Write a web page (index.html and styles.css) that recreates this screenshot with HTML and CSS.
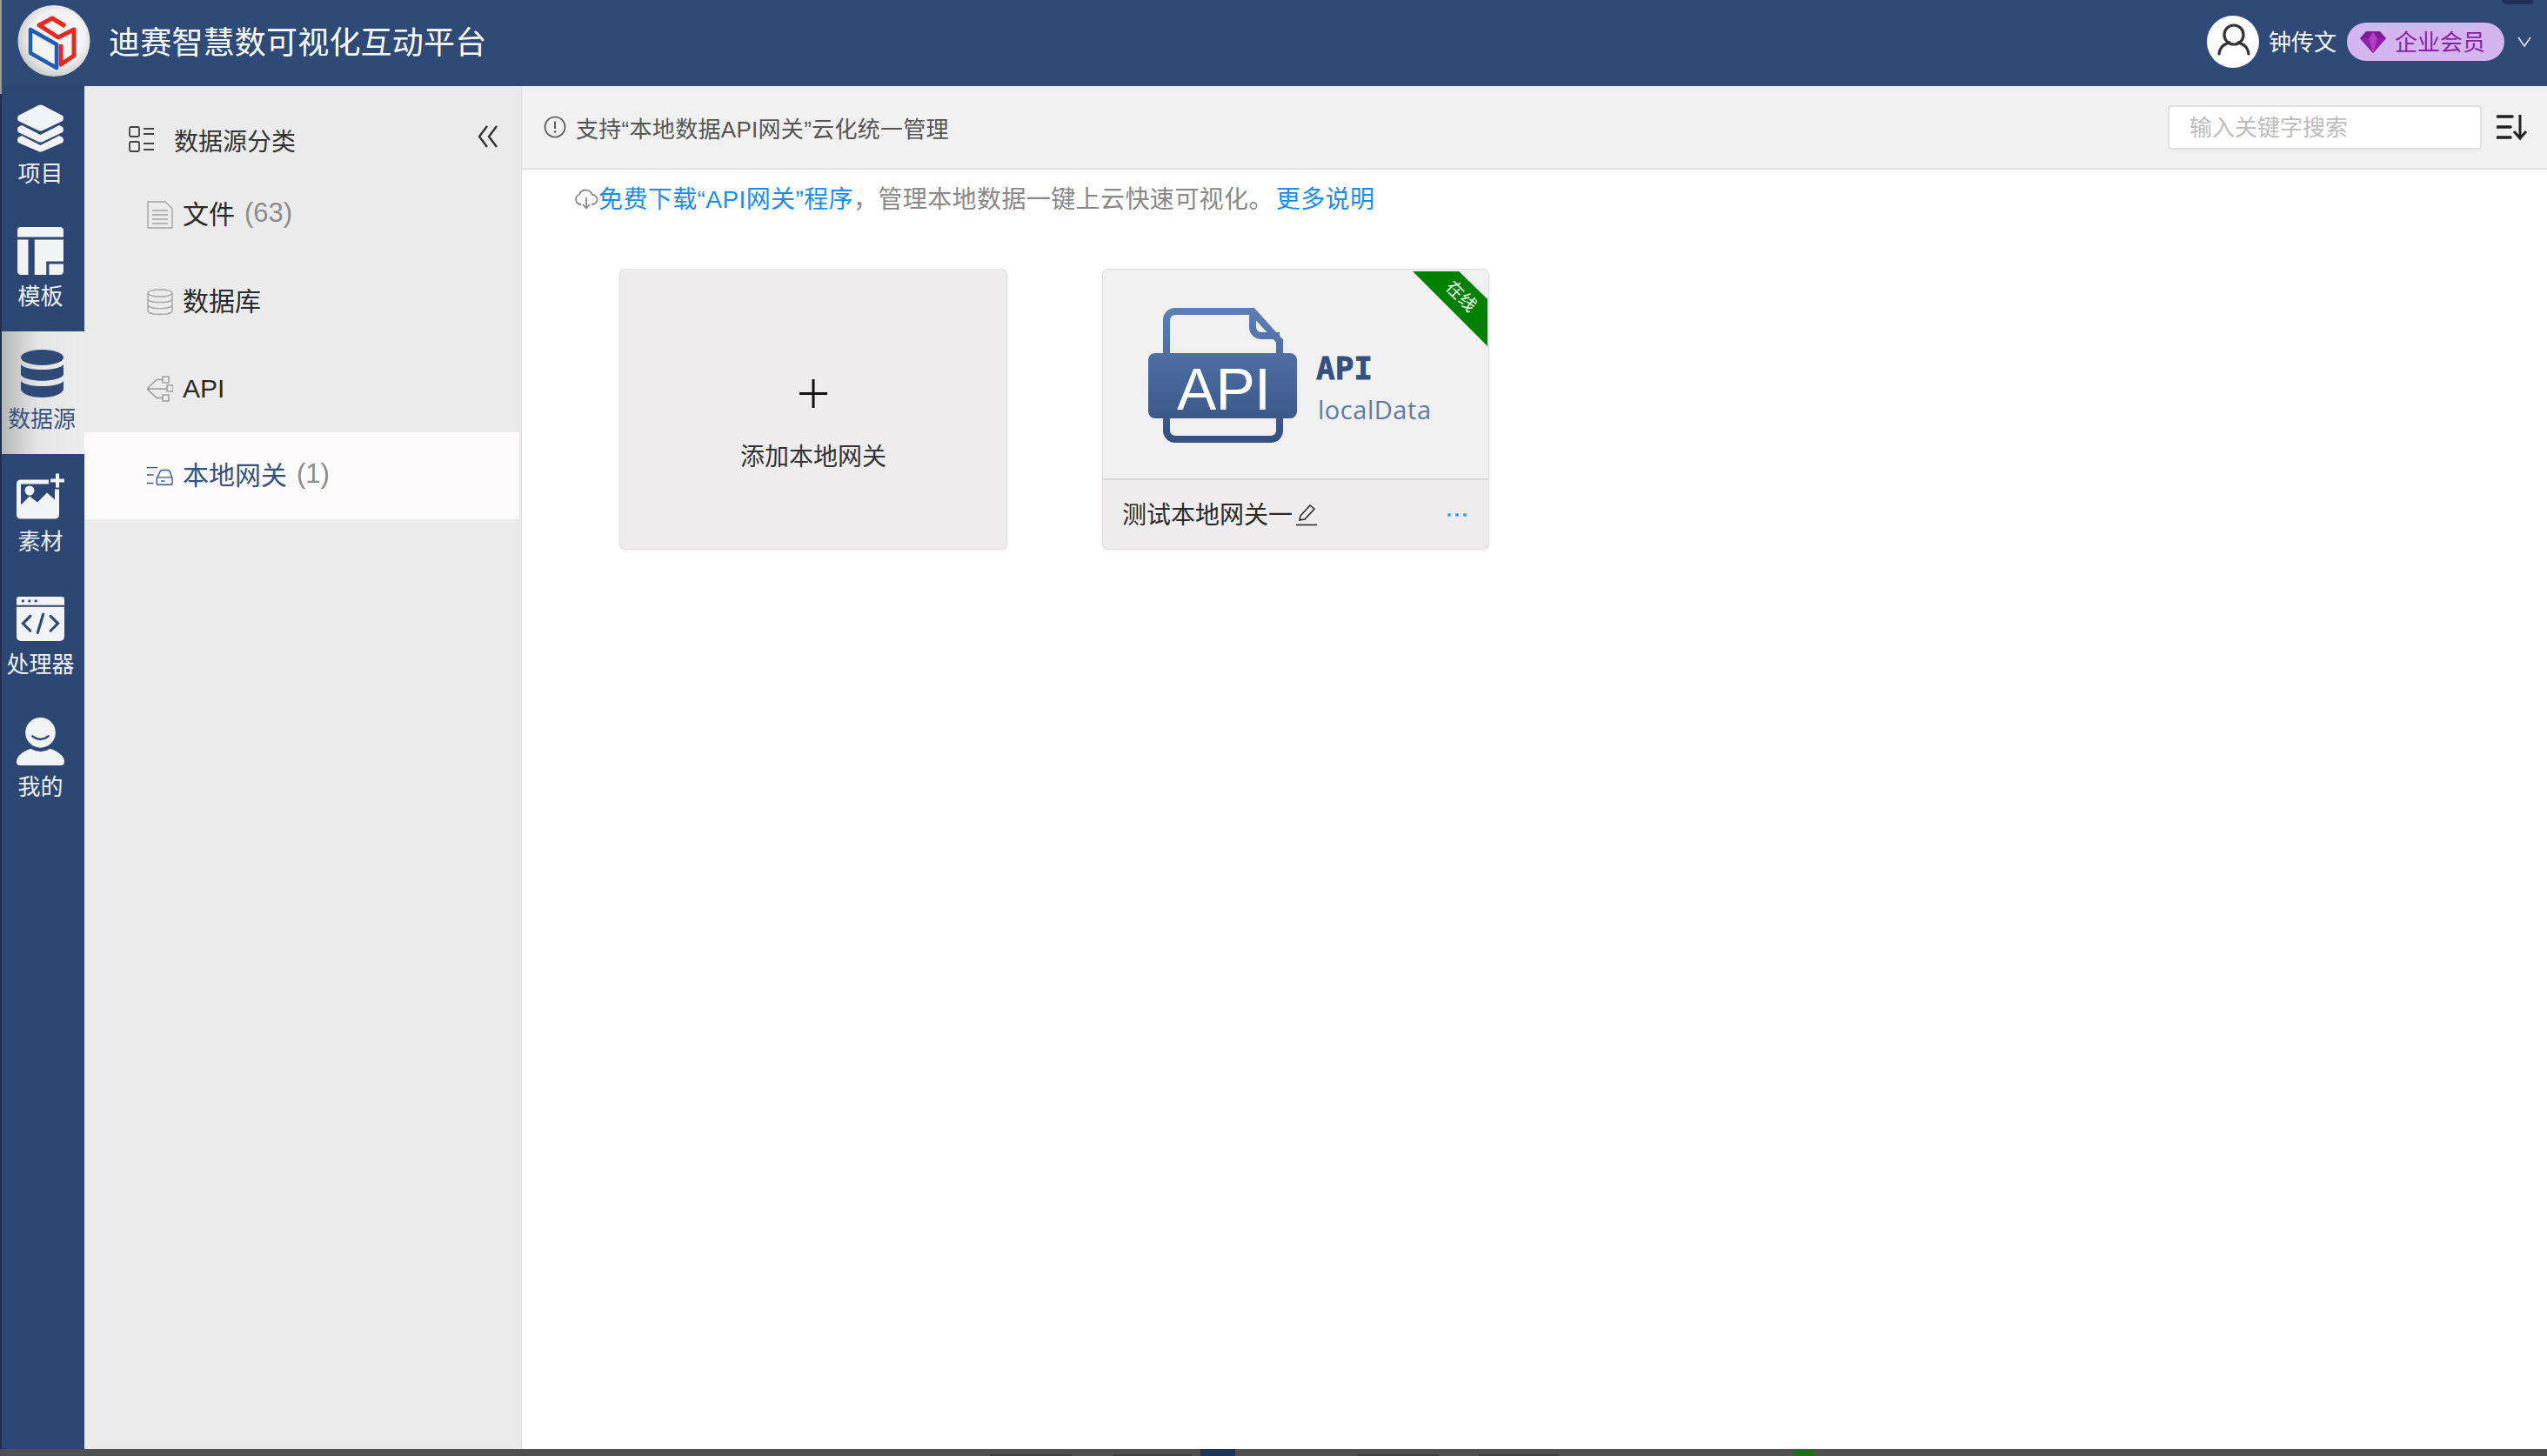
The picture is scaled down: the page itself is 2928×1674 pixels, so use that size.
FILE: index.html
```html
<!DOCTYPE html>
<html lang="zh-CN">
<head>
  <meta charset="UTF-8">
  <title>迪赛智慧数可视化互动平台</title>
  <link rel="stylesheet" href="styles.css">
</head>
<body>
  <header class="topbar">
    <svg class="logo" viewBox="0 0 84 84">
      <defs>
        <radialGradient id="logoBg" cx="0.55" cy="0.45" r="0.6">
          <stop offset="0.6" stop-color="#f4f4f4"/>
          <stop offset="1" stop-color="#c4c4c4"/>
        </radialGradient>
      </defs>
      <ellipse cx="42" cy="41" rx="41.5" ry="41" fill="url(#logoBg)"/>
      <path d="M15 28 L45 45 V72 L15 55 Z" fill="none" stroke="#1f5cb4" stroke-width="4.500" stroke-linejoin="round"/>
      <path d="M55 24 L40 15 L25 23 L47 37 L65 28 V58 L50 68 V45" fill="none" stroke="#e62a20" stroke-width="5" stroke-linejoin="round"/>
    </svg>
    <div class="brand">迪赛智慧数可视化互动平台</div>
    <span class="corner-mark"></span>
    <div class="user">
      <span class="avatar">
        <svg viewBox="0 0 60 60"><circle cx="31" cy="22" r="11" fill="none" stroke="#333" stroke-width="3.2"/><path d="M14 44 C15 35 22 32 26 31 M48 44 C47 35 40 32 36 31" fill="none" stroke="#333" stroke-width="3.2" stroke-linecap="round"/></svg>
      </span>
      <span class="user-name">钟传文</span>
      <span class="vip">
        <svg viewBox="0 0 30 26"><path d="M7 1 H23 L30 9 L15 26 L0 9 Z" fill="#7d1a96"/><path d="M0 9 H30 L15 26 Z" fill="#8f1fa6"/><path d="M10 9 L15 26 L20 9 L15 2 Z" fill="#b23fc6"/></svg>
        <span class="vip-text">企业会员</span>
      </span>
      <svg class="caret" viewBox="0 0 16 12"><path d="M1 1 L8 11 L15 1" fill="none" stroke="#e4e8ef" stroke-width="1.6"/></svg>
    </div>
  </header>

  <div class="layout">
    <nav class="rail">
      <a class="rail-item">
        <svg class="rail-icon" viewBox="0 0 55 55">
          <path d="M25 1 Q27.500 0 30 1 L53 13 Q55 16 53 19 L30 30 Q27.500 31 25 30 L2 19 Q0 16 2 13 Z"/>
          <path d="M2 26 L6 24 L27.500 35 L49 24 L53 26 Q55 29 53 32 L30 43 Q27.500 44 25 43 L2 32 Q0 29 2 26 Z"/>
          <path d="M2 38 L6 36 L27.500 47 L49 36 L53 38 Q55 41 53 44 L30 54 Q27.500 55 25 54 L2 44 Q0 41 2 38 Z"/>
        </svg>
        <span>项目</span>
      </a>
      <a class="rail-item">
        <svg class="rail-icon" viewBox="0 0 51 53">
          <path d="M4 0 H47 Q51 0 51 4 V11 H0 V4 Q0 0 4 0 Z"/>
          <path d="M0 14 H12 V53 H4 Q0 53 0 49 Z"/>
          <path d="M19 14 H51 V38 H32 V53 H19 Z"/>
          <path d="M35 41 H51 V49 Q51 53 47 53 H35 Z"/>
        </svg>
        <span>模板</span>
      </a>
      <a class="rail-item is-active">
        <svg class="rail-icon" viewBox="0 0 49 55">
          <ellipse cx="24.500" cy="9" rx="24.500" ry="9"/>
          <path d="M0 17 C6 25 43 25 49 17 V29 C44 38 5 38 0 29 Z"/>
          <path d="M0 36 C6 44 43 44 49 36 V46 C44 58 5 58 0 46 Z"/>
        </svg>
        <span>数据源</span>
      </a>
      <a class="rail-item">
        <svg class="rail-icon" viewBox="0 0 55 52">
          <path fill-rule="evenodd" d="M5 7 H37 V12 H5 V36 L15 26 L24 33 L35 22 L44 30 V18 H49 V47 Q49 52 44 52 H5 Q0 52 0 47 V12 Q0 7 5 7 Z M15 14 A5.500 5.500 0 1 0 15 25 A5.500 5.500 0 1 0 15 14 Z"/>
          <path d="M45 0 H49 V6 H55 V10 H49 V16 H45 V10 H39 V6 H45 Z"/>
        </svg>
        <span>素材</span>
      </a>
      <a class="rail-item">
        <svg class="rail-icon" viewBox="0 0 52 48">
          <path d="M3 0 H49 Q52 0 52 3 V9 H0 V3 Q0 0 3 0 Z"/>
          <path d="M0 11 H52 V43 Q52 48 47 48 H5 Q0 48 0 43 Z"/>
          <g fill="#2f4a77"><circle cx="7" cy="4.500" r="1.500"/><circle cx="14" cy="4.500" r="1.500"/><circle cx="21" cy="4.500" r="1.500"/></g>
          <path d="M15 21 L7 29 L15 37 M37 21 L45 29 L37 37 M29 19 L23 39" fill="none" stroke="#2f4a77" stroke-width="3" stroke-linecap="round"/>
        </svg>
        <span>处理器</span>
      </a>
      <a class="rail-item">
        <svg class="rail-icon" viewBox="0 0 54 54">
          <circle cx="27" cy="17" r="17"/>
          <path d="M18 21 Q27 28 36 21" fill="none" stroke="#2f4a77" stroke-width="2.400" stroke-linecap="round"/>
          <path d="M16 35 Q27 42 38 35 Q54 41 54 50 Q54 54 50 54 H4 Q0 54 0 50 Q0 41 16 35 Z"/>
        </svg>
        <span>我的</span>
      </a>
    </nav>

    <aside class="panel">
      <div class="panel-head">
        <svg class="panel-head-icon" viewBox="0 0 30 30"><g fill="none" stroke="#444" stroke-width="1.800"><rect x="1" y="1" width="11" height="11" rx="1.500"/><rect x="1" y="18" width="11" height="11" rx="1.500"/><path d="M17 3 H29 M17 9 H29 M17 20 H29 M17 27 H29"/></g></svg>
        <span class="panel-title">数据源分类</span>
        <svg class="collapse" viewBox="0 0 24 26"><path d="M11 1 L2 13 L11 25 M22 1 L13 13 L22 25" fill="none" stroke="#333" stroke-width="2.400"/></svg>
      </div>
      <a class="panel-row">
        <svg class="row-icon" viewBox="0 0 30 32"><g fill="none" stroke="#a5a5a5" stroke-width="1.400"><path d="M1 1 H21 L29 9 V31 H1 Z"/><path d="M6 11 H24 M6 16 H24 M6 21 H24 M6 26 H24"/></g></svg>
        <span class="row-label">文件</span><em class="count">(63)</em>
      </a>
      <a class="panel-row">
        <svg class="row-icon" viewBox="0 0 30 30"><g fill="none" stroke="#a5a5a5" stroke-width="1.400"><ellipse cx="15" cy="5" rx="14" ry="4"/><path d="M1 5 V25 C1 31 29 31 29 25 V5 M1 11.500 C1 17 29 17 29 11.500 M1 18.500 C1 24 29 24 29 18.500"/></g></svg>
        <span class="row-label">数据库</span>
      </a>
      <a class="panel-row">
        <svg class="row-icon" viewBox="0 0 30 30"><g fill="none" stroke="#999" stroke-width="1.400"><rect x="18" y="1" width="7" height="7"/><rect x="23" y="11" width="7" height="7"/><rect x="18" y="22" width="7" height="7"/><path d="M0 15 H23 M0 15 L11 4.500 H18 M0 15 L11 25.500 H18"/></g></svg>
        <span>API</span>
      </a>
      <a class="panel-row is-active">
        <svg class="row-icon" viewBox="0 0 32 24"><g fill="none" stroke="#3a5a8c" stroke-width="1.500"><path d="M0 2 H13 M0 11 H8 M0 21 H8"/><path d="M12 21 V15 L16 7 Q17 5 19 5 H25 Q27 5 28 7 L31 15 V21 Q31 23 29 23 H14 Q12 23 12 21 Z M12 14 H31"/><path d="M17 18.500 H22"/></g></svg>
        <span class="row-label">本地网关</span><em class="count">(1)</em>
      </a>
    </aside>

    <main class="main">
      <div class="toolbar">
        <svg class="notice-icon" viewBox="0 0 26 26"><circle cx="13" cy="13" r="11.500" fill="none" stroke="#555" stroke-width="1.700"/><path d="M13 6.500 V15" stroke="#555" stroke-width="1.900"/><circle cx="13" cy="18.500" r="1.300" fill="#555"/></svg>
        <span class="notice">支持“本地数据API网关”云化统一管理</span>
        <div class="search">输入关键字搜索</div>
        <svg class="sort" viewBox="0 0 36 30"><path d="M1 3 H18 M1 15 H16 M1 27 H16" stroke="#222" stroke-width="3.600" stroke-linecap="round"/><path d="M27 1 V27 M20 20 L27 28 L34 20" fill="none" stroke="#222" stroke-width="3"/></svg>
      </div>

      <p class="tip">
        <svg class="tip-icon" viewBox="0 0 28 24"><path d="M8 18 H7 A6 6 0 0 1 6 6.500 A8 8 0 0 1 21 7 A5.500 5.500 0 0 1 21 18 H20" fill="none" stroke="#8a8a8a" stroke-width="1.800"/><path d="M14 10 V22 M10 18 L14 22.500 L18 18" fill="none" stroke="#8a8a8a" stroke-width="1.800"/></svg>
        <a class="link">免费下载“API网关”程序</a>，管理本地数据一键上云快速可视化。<a class="link more">更多说明</a>
      </p>

      <div class="cards">
        <div class="card card-add">
          <svg class="plus" viewBox="0 0 32 33"><path d="M16 0 V33 M0 16.500 H32" stroke="#111" stroke-width="3"/></svg>
          <span>添加本地网关</span>
        </div>

        <div class="card">
          <div class="thumb">
            <svg class="api-art" viewBox="0 0 443 241">
              <defs>
                <linearGradient id="apiBlue" gradientUnits="userSpaceOnUse" x1="0" y1="44" x2="0" y2="199">
                  <stop offset="0" stop-color="#5c7fb8"/>
                  <stop offset="1" stop-color="#34507f"/>
                </linearGradient>
              </defs>
              <g fill="none" stroke="url(#apiBlue)" stroke-width="8">
                <path d="M73 100 V58 A10 10 0 0 1 83 48 H172 L203 82 V100"/>
                <path d="M172 48 V66 A10 10 0 0 0 182 76 H203"/>
                <path d="M73 165 V185 A10 10 0 0 0 83 195 H193 A10 10 0 0 0 203 185 V165"/>
              </g>
              <rect x="52" y="96" width="171" height="75" rx="8" fill="url(#apiBlue)"/>
              <text class="art-band" x="85" y="161" textLength="108">API</text>
              <text class="art-api" x="245" y="126">API</text>
              <text class="art-local" x="247" y="172" textLength="130">localData</text>
            </svg>
            <svg class="ribbon" viewBox="0 0 86 86"><path d="M0 0 H53 L86 32 V86 Z" fill="#008000"/></svg>
            <span class="ribbon-text">在线</span>
          </div>
          <div class="card-foot">
            <span class="card-name">测试本地网关一</span>
            <svg class="edit" viewBox="0 0 26 26"><path d="M5 19 L6 14 L17 2 L22 6 L11 18 Z M1 24.500 H25" fill="none" stroke="#222" stroke-width="1.500"/></svg>
            <span class="dots"><i></i><i></i><i></i></span>
          </div>
        </div>
      </div>
    </main>
  </div>

  <div class="dock"></div>
</body>
</html>
```

FILE: styles.css
```css
* {
  box-sizing: border-box;
}
html, body {
  height: 100%;
}
body {
  margin: 0;
  display: flex;
  flex-direction: column;
  overflow: hidden;
  background: #fff;
  color: #333;
  font-family: "Liberation Sans", "Noto Sans CJK SC", sans-serif;
}
p {
  margin: 0;
}
em {
  font-style: normal;
}

/* top bar */
.topbar {
  position: relative;
  flex: none;
  height: 99px;
  display: flex;
  align-items: center;
  padding: 0 0 4px 18px;
  border-left: 2px solid #9a9a9a;
  background: #2f4a77;
  color: #fff;
}
.logo {
  width: 84px;
  height: 84px;
  flex: none;
}
.brand {
  margin: -4px 0 0 21px;
  font-size: 36px;
  letter-spacing: 0.2px;
}
.corner-mark {
  position: absolute;
  top: 0;
  right: 16px;
  width: 36px;
  height: 5px;
  border-radius: 0 0 6px 30px;
  background: #1b3157;
}
.user {
  margin-left: auto;
  display: flex;
  align-items: center;
  padding-right: 18px;
  font-size: 26px;
}
.avatar {
  width: 60px;
  height: 60px;
  border-radius: 50%;
  background: #fff;
}
.avatar svg {
  display: block;
}
.user-name {
  margin: -2px 0 0 11px;
}
.vip {
  display: flex;
  align-items: center;
  gap: 10px;
  width: 181px;
  height: 44px;
  margin-left: 12px;
  padding-left: 15px;
  border-radius: 22px;
  background: #d5b5ef;
  color: #8a1fa8;
}
.vip svg {
  width: 30px;
  height: 26px;
}
.vip-text {
  margin-top: -3px;
}
.caret {
  width: 16px;
  height: 12px;
  margin-left: 15px;
}

/* page body */
.layout {
  flex: 1;
  display: flex;
  min-height: 0;
}
.rail {
  flex: none;
  width: 97px;
  padding-left: 2px;
  background: linear-gradient(#9a9a9a, #9a9a9a) 0 0 / 2px 9px no-repeat,
    linear-gradient(#1f2f4d, #1f2f4d) 0 0 / 2px 100% no-repeat,
    #2d4774;
}
.rail-item {
  display: flex;
  flex-direction: column;
  align-items: center;
  height: 141px;
  padding: 21px 6px 0 0;
  color: #f0f2f5;
  font-size: 26px;
  line-height: 32px;
}
.rail-icon {
  display: block;
  width: 55px;
  height: 55px;
  margin-bottom: 9px;
  fill: #f2f3f5;
}
.rail-item.is-active {
  padding-right: 3px;
  background: linear-gradient(90deg, #b8b8b8, #e6e6e6 45%, #ececec);
  color: #3b5580;
}
.rail-item.is-active .rail-icon {
  fill: #2f4a77;
}

.panel {
  flex: none;
  width: 503px;
  padding-right: 2px;
  border-right: 1px solid #dcdcdc;
  background: #ebebeb;
  font-size: 30px;
}
.panel-head {
  display: flex;
  align-items: center;
  height: 98px;
  padding: 28px 24px 0 51px;
  color: #333;
}
.panel-head-icon {
  width: 30px;
  height: 30px;
  margin-top: -4px;
}
.panel-title {
  margin: -2px 0 0 22px;
  font-size: 28px;
}
.collapse {
  width: 24px;
  height: 26px;
  margin: -10px 0 0 auto;
}
.panel-row {
  display: flex;
  align-items: center;
  height: 100px;
  padding-left: 72px;
  color: #2a2a2a;
}
.row-icon {
  flex: none;
  width: 30px;
  height: 32px;
  margin-right: 11px;
}
.row-label {
  margin-top: -6px;
}
.count {
  margin: -4px 0 0 11px;
  color: #8c8c8c;
  font-size: 31px;
}
.panel-row.is-active {
  background: #fdfbfb;
  color: #34527f;
}
.panel-row.is-active .row-icon {
  height: 24px;
}

.main {
  flex: 1;
  min-width: 0;
}
.toolbar {
  display: flex;
  align-items: center;
  height: 96px;
  padding: 0 22px 0 25px;
  border-bottom: 2px solid #e2e2e2;
  background: #f0f0f0;
  color: #555;
  font-size: 26px;
}
.notice-icon {
  width: 26px;
  height: 26px;
}
.notice {
  margin-left: 11px;
  letter-spacing: 0.3px;
}
.search {
  width: 361px;
  height: 51px;
  margin-left: auto;
  padding-left: 23px;
  border: 2px solid #e0e0e0;
  border-radius: 4px;
  background: #fff;
  color: #bdbdbd;
  line-height: 49px;
}
.sort {
  width: 36px;
  height: 30px;
  margin-left: 17px;
}
.tip {
  display: flex;
  align-items: center;
  height: 40px;
  margin-top: 12px;
  padding-left: 60px;
  color: #888;
  font-size: 28px;
  letter-spacing: 0.4px;
}
.tip-icon {
  width: 28px;
  height: 24px;
  margin-top: 3px;
}
.link {
  color: #1c8cf2;
}
.more {
  margin-left: 3px;
}

.cards {
  display: flex;
  gap: 111px;
  margin-top: 63px;
  padding-left: 113px;
}
.card {
  width: 443px;
  height: 321px;
  border-radius: 6px;
  background: #eeecec;
  box-shadow: 0 1px 6px rgba(0, 0, 0, 0.08), 0 0 0 1px #e6e6e6;
}
.card-add {
  display: flex;
  flex-direction: column;
  align-items: center;
  width: 444px;
  padding-top: 126px;
  color: #333;
  font-size: 28px;
}
.plus {
  width: 32px;
  height: 33px;
  margin-bottom: 34px;
}
.thumb {
  position: relative;
  height: 242px;
  border-bottom: 2px solid #d8d8d8;
  border-radius: 6px 6px 0 0;
  background: #f0f0f0;
}
.api-art {
  display: block;
  width: 443px;
  height: 241px;
}
.art-band {
  fill: #fff;
  font-size: 68px;
}
.art-api {
  fill: #34507f;
  stroke: #34507f;
  stroke-width: 0.8px;
  font-family: "DejaVu Sans Mono", monospace;
  font-size: 36px;
  font-weight: bold;
}
.art-local {
  fill: #5f7ca6;
  font-family: "Open Sans", sans-serif;
  font-size: 29px;
}
.ribbon {
  position: absolute;
  top: 2px;
  right: 1px;
  width: 86px;
  height: 86px;
}
.ribbon-text {
  position: absolute;
  top: 15px;
  right: 10px;
  color: #fff;
  font-size: 20px;
  transform: rotate(45deg);
}
.card-foot {
  display: flex;
  align-items: center;
  height: 79px;
  padding: 0 25px 0 22px;
  color: #2a2a2a;
  font-size: 28px;
}
.card-name {
  margin-top: -3px;
}
.edit {
  width: 26px;
  height: 26px;
  margin-left: 3px;
}
.dots {
  display: flex;
  gap: 5px;
  margin-left: auto;
}
.dots i {
  width: 4px;
  height: 4px;
  border-radius: 50%;
  background: #3d9bf5;
}

/* strip under the window */
.dock {
  flex: none;
  height: 8px;
  background:
    linear-gradient(#1f3558, #1f3558) 1380px 0 / 40px 100% no-repeat,
    linear-gradient(#1f6e1f, #1f6e1f) 2062px 0 / 24px 100% no-repeat,
    linear-gradient(#3c3c3c, #3c3c3c) 1138px 6px / 94px 2px no-repeat,
    linear-gradient(#3c3c3c, #3c3c3c) 1280px 6px / 90px 2px no-repeat,
    linear-gradient(#3c3c3c, #3c3c3c) 1560px 6px / 94px 2px no-repeat,
    linear-gradient(#3c3c3c, #3c3c3c) 1700px 6px / 92px 2px no-repeat,
    #505050;
}
```
